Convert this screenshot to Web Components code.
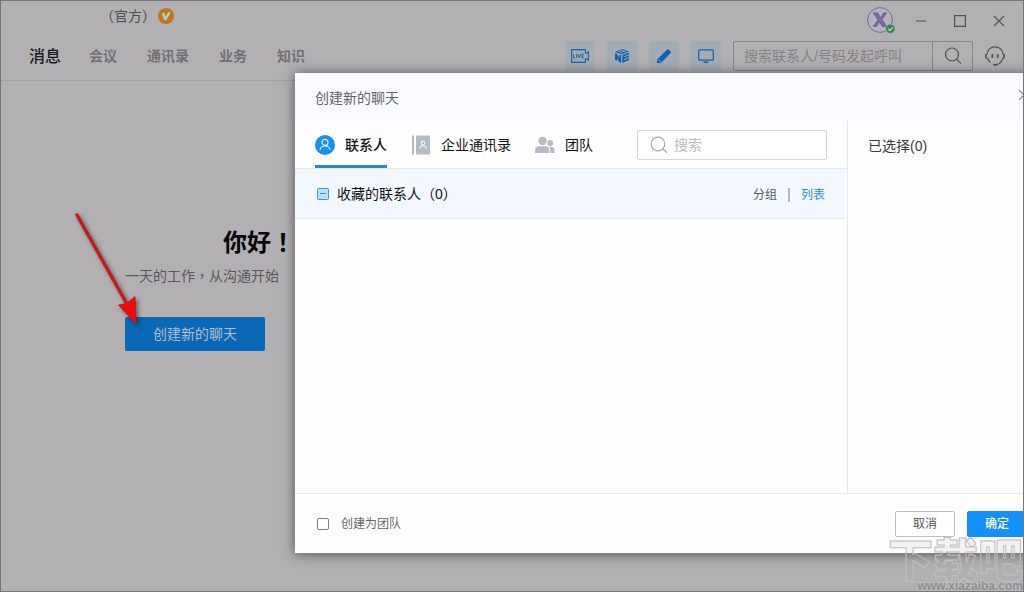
<!DOCTYPE html>
<html lang="zh-CN">
<head>
<meta charset="utf-8">
<meta name="viewport" content="width=device-width, initial-scale=1">
<title>消息</title>
<style>
  html, body { margin: 0; height: 100%; overflow: hidden; }
  body { font: 14px/20px "Liberation Sans", "Noto Sans CJK SC", sans-serif; color: #222; background: #b2b0b3; }
</style>
</head>
<body>
<app-window>
  <app-header slot="header"></app-header>
  <welcome-panel></welcome-panel>
  <chat-dialog slot="overlay"></chat-dialog>
  <pointer-arrow slot="overlay"></pointer-arrow>
  <site-watermark slot="overlay"></site-watermark>
</app-window>

<script>
const base = `
  *, *::before { box-sizing: border-box; }
  button, input { font: inherit; color: inherit; margin: 0; }
  button { border: 0; padding: 0; background: none; cursor: pointer; }
  a { color: inherit; text-decoration: none; }
  svg { display: block; flex: none; }
`;
const define = (name, css, html) => customElements.define(name, class extends HTMLElement {
  constructor() {
    super();
    this.attachShadow({ mode: 'open' }).innerHTML = `<style>${base}${css}</style>${html}`;
  }
});

define('app-window', `
  :host { display: flex; flex-direction: column; position: relative; box-sizing: border-box;
    height: 100vh; border: 1px solid #777578; background: #b2b0b3; overflow: hidden; }
  main { flex: 1; }
`, `<slot name="header"></slot><main><slot></slot></main><slot name="overlay"></slot>`);

define('verified-badge', `:host { display: block; }`, `
  <svg width="16" height="16" viewBox="0 0 16 16"><circle cx="8" cy="8" r="8" fill="#b87916"/>
  <path d="M3.8 5.2 6.4 4.4 7.5 8.6 10.2 4.2 12.8 4.2 8.4 12 6 12Z" fill="#c9c3bd"/></svg>`);

define('user-avatar', `:host { display: block; }`, `
  <svg width="28" height="28" viewBox="0 0 28 28" aria-label="头像">
    <circle cx="13" cy="13" r="12.4" fill="#b5b2bc" stroke="#746aa3"/>
    <path d="M5.5 5.5H11L13.5 10 16.5 5.5H20.5L15.5 12.5 20.5 20H15.2L12.6 15.5 9.5 20H5.5L10.5 12.8Z" fill="#6d63a0"/>
    <path d="M7 6 18 20M9 6 19 19M5.7 19 18.5 5.8M8 20 20 6" stroke="#918ab4" stroke-width=".6" stroke-dasharray="1 1"/>
    <circle cx="23.3" cy="21.8" r="4.6" fill="#35864d" stroke="#b2b0b3" stroke-width=".6"/>
    <path d="M21 21.8 22.8 23.5 25.8 20.5" fill="none" stroke="#c5d0c6" stroke-width="1.3"/>
  </svg>`);

define('window-controls', `
  :host { display: flex; align-items: center; height: 40px; color: #545255; }
  user-avatar { margin-right: 6px; }
  button { width: 39px; height: 30px; display: grid; place-items: center; }
  svg { fill: none; stroke: currentColor; }
`, `
  <user-avatar></user-avatar>
  <button aria-label="最小化"><svg width="12" height="12"><path d="M1 6H11" stroke-width="1.6" stroke="#737174"/></svg></button>
  <button aria-label="最大化"><svg width="12" height="12"><path d="M.6 .6H11.4V11.4H.6Z" stroke-width="1.2"/></svg></button>
  <button aria-label="关闭"><svg width="12" height="12"><path d="M1 1 11 11M11 1 1 11" stroke-width="1.2"/></svg></button>`);

define('main-nav', `
  :host { display: block; }
  nav { display: flex; align-items: center; gap: 30px; height: 28px; margin-bottom: 2px; font-weight: 700; color: #727073;
    font-family: "Noto Sans CJK SC", sans-serif; }
  a[aria-current] { font-size: 16px; font-weight: 500; color: #1c1b1e; margin-right: -2px; }
`, `<nav><a href="#msg" aria-current="page">消息</a><a href="#meet">会议</a><a href="#book">通讯录</a><a href="#biz">业务</a><a href="#know">知识</a></nav>`);

define('tool-tile', `
  :host { display: block; color: #1062b0; }
  button { width: 30px; height: 30px; background: #a3abb5; display: grid; place-items: center; }
`, `<button><slot></slot></button>`);

define('call-search', `
  :host { display: block; width: 240px; color: #545255; }
  form { display: flex; height: 30px; border: 1px solid #868487; border-radius: 2px; }
  input { flex: 1; min-width: 0; border: 0; outline: 0; background: none; padding: 0 10px; }
  input::placeholder { color: #858386; opacity: 1; }
  button { width: 40px; border-left: 1px solid #868487; display: grid; place-items: center; }
`, `<form onsubmit="return false"><input type="text" aria-label="搜索联系人" placeholder="搜索联系人/号码发起呼叫">
  <button aria-label="搜索"><svg width="18" height="18" fill="none" stroke="currentColor" stroke-width="1.2"><circle cx="8" cy="7.5" r="6.5"/><path d="M12.6 12.2 17 16.6"/></svg></button></form>`);

define('app-header', `
  :host { display: block; border-bottom: 1px solid #a3a1a4; }
  .row { display: flex; justify-content: space-between; }
  .top { height: 40px; padding: 0 5px 0 99px; }
  .title { display: flex; align-items: center; gap: 2px; height: 30px; color: #504e51; }
  .bar { align-items: center; padding: 0 18px 9px 28px; }
  .tools { display: flex; align-items: center; gap: 12px; }
  .help { color: #4f4d50; }
`, `
  <div class="row top"><div class="title"><span>（官方）</span><verified-badge></verified-badge></div><window-controls></window-controls></div>
  <div class="row bar"><main-nav></main-nav>
    <div class="tools">
      <tool-tile><svg width="18" height="14" viewBox="0 0 18 14" fill="none" stroke="currentColor" aria-label="直播"><path d="M14.4 4V.6H.6V13.4H14.4V10" stroke-width="1.1"/><path d="M14 4.2H15L17.4 3V11L15 9.8H14" stroke-width="1.1"/><path d="M2.5 5V9H4.3M5.6 5V9M6.9 5 8.2 9 9.5 5M12.8 5H11V9H12.8M11 7H12.5" stroke-width=".9"/></svg></tool-tile>
      <tool-tile><svg width="16" height="16" viewBox="0 0 16 16" aria-label="应用"><path d="M1 4 8.5 1 15 3.5 7.8 6.3ZM1 5 3 5.8 5.3 10V6.6L7.2 7.3V15L5 14 3 10.2V12.8L1 11.8ZM8.4 7.2 15 4.6V6.3L10.2 8.2V9.2L15 7.3V9L10.2 11V12.2L15 10.1V12L8.4 15Z" fill="currentColor"/><path d="M4 3.8 8.5 2.3 12 3.7M6 5 10.5 3.2" fill="none" stroke="#a3abb5" stroke-width=".8"/></svg></tool-tile>
      <tool-tile><svg width="16" height="16" viewBox="0 0 16 16" fill="currentColor" aria-label="白板"><path d="M1 15V11.5L11 1.8Q12 1 13 1.8L14.4 3.2Q15.2 4.2 14.4 5.2L5 15Z"/><path d="M2.2 11.3 5.4 14.6" stroke="#a3abb5" stroke-width=".9"/></svg></tool-tile>
      <tool-tile><svg width="16" height="16" viewBox="0 0 16 16" fill="none" stroke="currentColor" stroke-width="1.2" aria-label="投屏"><rect x=".7" y="1.8" width="14.6" height="10.4" rx="1"/><path d="M5.5 14.2H10.5" stroke-width="1.4"/></svg></tool-tile>
      <call-search></call-search>
      <button class="help" aria-label="客服"><svg width="20" height="20" viewBox="0 0 20 20" fill="none" stroke="currentColor"><path d="M2 8.5C2.5 3.5 6 .8 10 .8S17.5 3.5 18 8.5M17.8 12C17 16 14.5 18 11.5 18.6M2.3 12C3 14 4 15.5 5.5 16.5" stroke-width="1.2"/><path d="M1 8V12.5M19 8V12.5M7.3 8V12M12.7 8V12" stroke-width="1.6"/><path d="M8.3 18.8H11.8" stroke-width="1.8"/></svg></button>
    </div></div>`);

define('welcome-panel', `
  :host { display: block; padding: 144px 0 0 124px; }
  section { width: 170px; }
  h1 { margin: 0; height: 32px; text-align: right; font-size: 24px; line-height: 32px; font-weight: 700; color: #050506; }
  p { margin: 8px 0 32px; height: 20px; color: #59575a; white-space: nowrap; }
  h1, p { font-family: "Noto Sans CJK SC", sans-serif; }
  .mark { font-family: "Noto Sans CJK TC", sans-serif; }
  button { display: block; width: 140px; height: 34px; border-radius: 2px; background: #0a68b9; color: #b3bfcc; }
`, `<section><h1>你好<span class="mark" lang="zh-TW">！</span></h1><p>一天的工作<span class="mark" lang="zh-TW">，</span>从沟通开始</p><button>创建新的聊天</button></section>`);

define('dialog-tab', `
  :host { display: block; color: #111; }
  button { display: flex; align-items: center; gap: 10px; height: 47px; border-bottom: 3px solid transparent; padding-top: 3px; }
  :host([active]) button { border-color: #2587d3; font-weight: 500; }
`, `<button role="tab"><slot name="icon"></slot><slot></slot></button>`);

define('contact-search', `
  :host { display: block; width: 190px; }
  label { display: flex; align-items: center; gap: 6px; height: 30px; padding: 0 12px; border: 1px solid #d3d4d8; border-radius: 2px; background: #fff; color: #a5a7ab; }
  input { flex: 1; min-width: 0; padding: 0; border: 0; outline: 0; background: none; color: #333; }
  input::placeholder { color: #babbbf; opacity: 1; }
`, `<label><svg width="18" height="18" fill="none" stroke="currentColor" stroke-width="1.2"><circle cx="8" cy="8" r="6.8"/><path d="M12.8 12.8 17 16.8"/></svg><input type="text" aria-label="搜索" placeholder="搜索"></label>`);

define('contact-group', `
  :host { display: flex; align-items: center; justify-content: space-between; box-sizing: border-box; height: 50px;
    margin-right: 2px; padding: 0 20px 0 22px; background: #f3f8fe; border-bottom: 1px solid #e3e9f0; color: #111; }
  .name { display: flex; align-items: center; gap: 8px; }
  .toggle { width: 12px; height: 12px; }
  .views { display: flex; align-items: center; gap: 11px; padding-top: 2px; font-size: 12px; color: #55585c; }
  .views i { width: 2px; height: 14px; background: #b3b6bc; }
  .views .on { color: #1f8fe6; }
`, `<div class="name"><button class="toggle" aria-label="收起"><svg width="12" height="12"><rect x=".5" y=".5" width="11" height="11" rx="1" fill="#b9e1fb" stroke="#3a9ad9"/><path d="M3 5.5H9" stroke="#3a8fd0"/></svg></button><span><slot></slot></span></div>
  <div class="views"><a href="#group">分组</a><i></i><a href="#list" class="on">列表</a></div>`);

define('dialog-footer', `
  :host { display: flex; align-items: center; justify-content: space-between; box-sizing: border-box; height: 60px;
    padding: 0 20px 0 22px; border-top: 1px solid #e8e9ec; font-size: 12px; color: #666; }
  label { display: flex; align-items: center; gap: 12px; }
  input { appearance: none; width: 12px; height: 12px; border: 1px solid #7c7c7c; border-radius: 2px; background: #fff; }
  .actions { display: flex; gap: 12px; }
  button { width: 60px; height: 26px; padding-top: 1px; border: 1px solid #bcbcbc; border-radius: 2px; color: #555; background: #fff; }
  .ok { border-color: #1290fb; background: #1290fb; color: #fff; font-weight: 500; }
`, `<label><input type="checkbox">创建为团队</label><div class="actions"><button>取消</button><button class="ok">确定</button></div>`);

/* The dialog is anchored beside the welcome text and runs past the right edge of the window. */
define('chat-dialog', `
  :host { display: flex; flex-direction: column; position: absolute; left: 294px; right: -24px; top: 72px; bottom: 38px;
    background: #fefefe; box-shadow: 0 1px 12px rgba(0,0,0,.55); }
  header { display: flex; align-items: center; justify-content: space-between; height: 48px; padding: 2px 18px 0 20px; background: #fafbff; }
  h2 { margin: 0; font-size: 14px; line-height: 20px; font-weight: 400; color: #606266; }
  .close { align-self: flex-start; height: 40px; color: #77797d; }
  .body { flex: 1; min-height: 0; display: flex; }
  .left { flex: 1; min-width: 0; }
  .tabs { display: flex; align-items: center; justify-content: space-between; height: 48px; padding: 0 20px; border-bottom: 1px solid #e6e8ec; }
  [role=tablist] { display: flex; gap: 24px; }
  aside { flex: 0 0 200px; border-left: 1px solid #e6e8ec; padding: 15px 20px; color: #3a3a3c; }
`, `
  <header><h2>创建新的聊天</h2><button class="close" aria-label="关闭"><svg width="10" height="10"><path d="M0 0 10 10M10 0 0 10" stroke="currentColor" stroke-width="1.2"/></svg></button></header>
  <div class="body">
    <div class="left">
      <div class="tabs"><div role="tablist">
        <dialog-tab active><svg slot="icon" width="20" height="20" fill="none"><circle cx="10" cy="10" r="10" fill="#1690f5"/><circle cx="10" cy="7.4" r="3" stroke="#d8f0ff" stroke-width="1.2"/><path d="M5 15C5.4 12.2 7.3 11 10 11S14.6 12.2 15 15" stroke="#d8f0ff" stroke-width="1.2"/></svg>联系人</dialog-tab>
        <dialog-tab><svg slot="icon" width="20" height="20" fill="none"><path d="M1 .5H3V19.5H1Z" fill="#b5bbc5"/><path d="M5 .5H19V19.5H5Z" fill="#b5bbc5"/><circle cx="12" cy="8" r="1.8" stroke="#eef0f4" stroke-width="1.2"/><path d="M8.6 14C8.8 11.8 10 10.8 12 10.8S15.2 11.8 15.4 14" stroke="#eef0f4" stroke-width="1.2"/></svg>企业通讯录</dialog-tab>
        <dialog-tab><svg slot="icon" width="20" height="20" fill="#b5bbc5"><circle cx="7.5" cy="6" r="4.2"/><circle cx="15.2" cy="8" r="2.9"/><path d="M0 18V15.5Q0 11.3 4.5 11.3H10Q14.2 11.3 14.2 15.5V18ZM15.3 18V15Q15.3 13 14 11.8H16Q19.5 12 19.5 15.5V18Z"/></svg>团队</dialog-tab>
      </div><contact-search></contact-search></div>
      <contact-group>收藏的联系人（0）</contact-group>
    </div>
    <aside>已选择(0)</aside>
  </div>
  <dialog-footer></dialog-footer>`);

define('pointer-arrow', `
  :host { display: block; position: absolute; left: 69px; top: 206px; pointer-events: none; }
  svg { filter: drop-shadow(2px 2px 2px rgba(0,0,0,.5)); }
`, `<svg width="80" height="130" viewBox="0 0 80 130"><path d="M7 8 57 97" stroke="#c41a1c" stroke-width="3.4" stroke-linecap="round"/><path d="M66 117 48.5 98 56.5 96.5 65 89.5Z" fill="#f20a0a" stroke="#c41a1c" stroke-width=".8"/></svg>`);

define('site-watermark', `
  :host { display: block; position: absolute; right: 0; bottom: 0; pointer-events: none; text-align: right;
    font-family: "Noto Sans CJK SC", sans-serif; white-space: nowrap; }
  .logo { font-size: 45px; line-height: 46px; font-weight: 900; color: rgba(160,160,160,.15); -webkit-text-stroke: 1px #bebec0; }
  .url { font: bold 12px/10px "Liberation Sans", sans-serif; color: #8f8d90; -webkit-text-stroke: 2px #bdbcbe; paint-order: stroke fill; }
`, `<div class="logo">下载吧</div><div class="url">www.xiazaiba.com</div>`);
</script>
</body>
</html>
